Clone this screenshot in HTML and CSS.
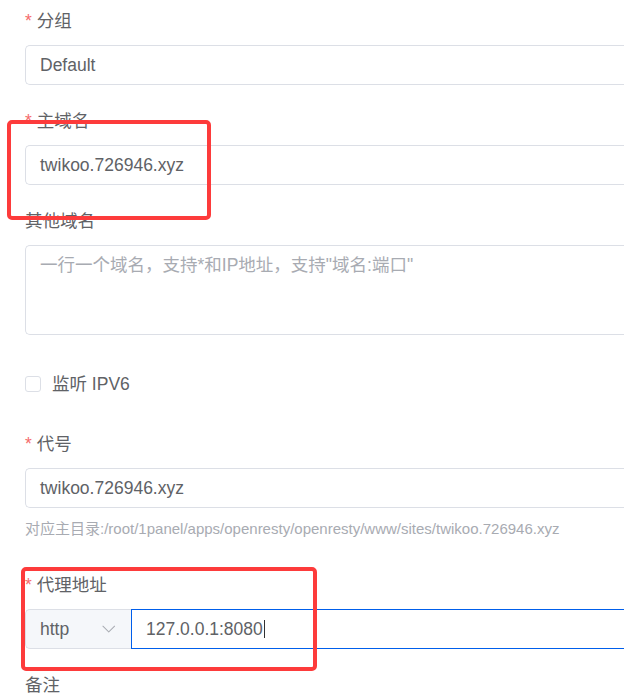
FILE: index.html
```html
<!DOCTYPE html>
<html lang="zh-CN">
<head>
<meta charset="utf-8">
<title>创建网站</title>
<link rel="stylesheet" href="styles.css">
</head>
<body>
<form class="form">
  <div class="item">
    <div class="label required">分组</div>
    <div class="input"><span class="value">Default</span></div>
  </div>
  <div class="item">
    <div class="label required">主域名</div>
    <div class="input"><span class="value">twikoo.726946.xyz</span></div>
  </div>
  <div class="item">
    <div class="label">其他域名</div>
    <div class="textarea"><span class="placeholder">一行一个域名，支持*和IP地址，支持"域名:端口"</span></div>
  </div>
  <div class="check-row">
    <span class="checkbox"></span>
    <span class="check-label">监听 IPV6</span>
  </div>
  <div class="item item-hint">
    <div class="label required">代号</div>
    <div class="input"><span class="value">twikoo.726946.xyz</span></div>
    <div class="hint">对应主目录:/root/1panel/apps/openresty/openresty/www/sites/twikoo.726946.xyz</div>
  </div>
  <div class="item">
    <div class="label required">代理地址</div>
    <div class="group">
      <div class="select">
        <span class="value">http</span>
        <svg class="arrow" viewBox="0 0 1024 1024" width="17.5" height="17.5"><path fill="currentColor" d="M831.872 340.864 512 652.672 192.128 340.864a30.592 30.592 0 0 0-42.752 0 29.12 29.12 0 0 0 0 41.6L489.664 714.24a32 32 0 0 0 44.672 0l340.288-331.712a29.12 29.12 0 0 0 0-41.728 30.592 30.592 0 0 0-42.752 0z"/></svg>
      </div>
      <div class="input input-focus"><span class="value">127.0.0.1:8080</span><span class="caret"></span></div>
    </div>
  </div>
  <div class="item">
    <div class="label">备注</div>
  </div>
</form>
<div class="mark mark-one"></div>
<div class="mark mark-two"></div>
</body>
</html>
```

FILE: styles.css
```css
html, body {
  margin: 0;
  padding: 0;
  overflow: hidden;
  background: #ffffff;
}

body {
  position: relative;
  width: 624px;
  height: 697px;
  font-family: "Liberation Sans", "Noto Sans CJK SC", sans-serif;
  font-size: 17.5px;
  color: #606266;
}

/* the form continues past the right edge of the frame, so the
   controls are cut there: no right border or right corners */
.form {
  width: 624px;
  padding: 7.5px 0 0 25px;
  box-sizing: border-box;
}

.item {
  margin-bottom: 22.5px;
}

.label {
  line-height: 27.5px;
  height: 27.5px;
  margin-bottom: 10px;
  color: #606266;
  white-space: nowrap;
}

.label.required::before {
  content: "*";
  color: #f56c6c;
  margin-right: 5px;
}

.input {
  height: 40px;
  box-sizing: border-box;
  border: 1px solid #dcdfe6;
  border-right: none;
  border-radius: 5px 0 0 5px;
  padding: 0 14px;
  line-height: 38px;
  display: flex;
  align-items: center;
  color: #606266;
  background: #ffffff;
}

.textarea {
  height: 90px;
  box-sizing: border-box;
  border: 1px solid #dcdfe6;
  border-right: none;
  border-radius: 5px 0 0 5px;
  padding: 6px 14px;
  line-height: 26.25px;
}

.placeholder {
  color: #a8abb2;
}

.check-row {
  height: 53px;
  margin-bottom: 20px;
  margin-top: -22px;
  padding-top: 22px;
  display: flex;
  align-items: center;
}

.checkbox {
  width: 16px;
  height: 16px;
  box-sizing: border-box;
  border: 1px solid #dcdfe6;
  border-radius: 3px;
  background: #ffffff;
  margin-right: 11px;
}

.check-label {
  color: #606266;
  line-height: 20px;
}

.hint {
  font-size: 15px;
  line-height: 20px;
  margin-top: 10.5px;
  padding-bottom: 10.5px;
  color: #a8abb2;
  white-space: nowrap;
}

.group {
  display: flex;
  height: 40px;
}

.select {
  width: 106px;
  flex: none;
  height: 40px;
  box-sizing: border-box;
  border: 1px solid #dcdfe6;
  border-right: none;
  border-radius: 5px 0 0 5px;
  background: #f5f7fa;
  padding: 0 14px;
  display: flex;
  align-items: center;
  justify-content: space-between;
  color: #606266;
}

.arrow {
  color: #a8abb2;
  display: block;
}

.input-focus {
  flex: 1;
  border-color: #005eeb;
  border-left: 1px solid #005eeb;
  border-right: none;
  border-radius: 0;
}

.caret {
  display: inline-block;
  width: 1px;
  height: 18px;
  background: #303133;
  margin-left: 1px;
}

.mark {
  position: absolute;
  box-sizing: border-box;
  border: 4px solid #fd3b3b;
  border-radius: 5px;
}

.mark-one {
  left: 7px;
  top: 119.5px;
  width: 204px;
  height: 100.5px;
}

.mark-two {
  left: 21px;
  top: 567px;
  width: 296px;
  height: 104px;
}
```
